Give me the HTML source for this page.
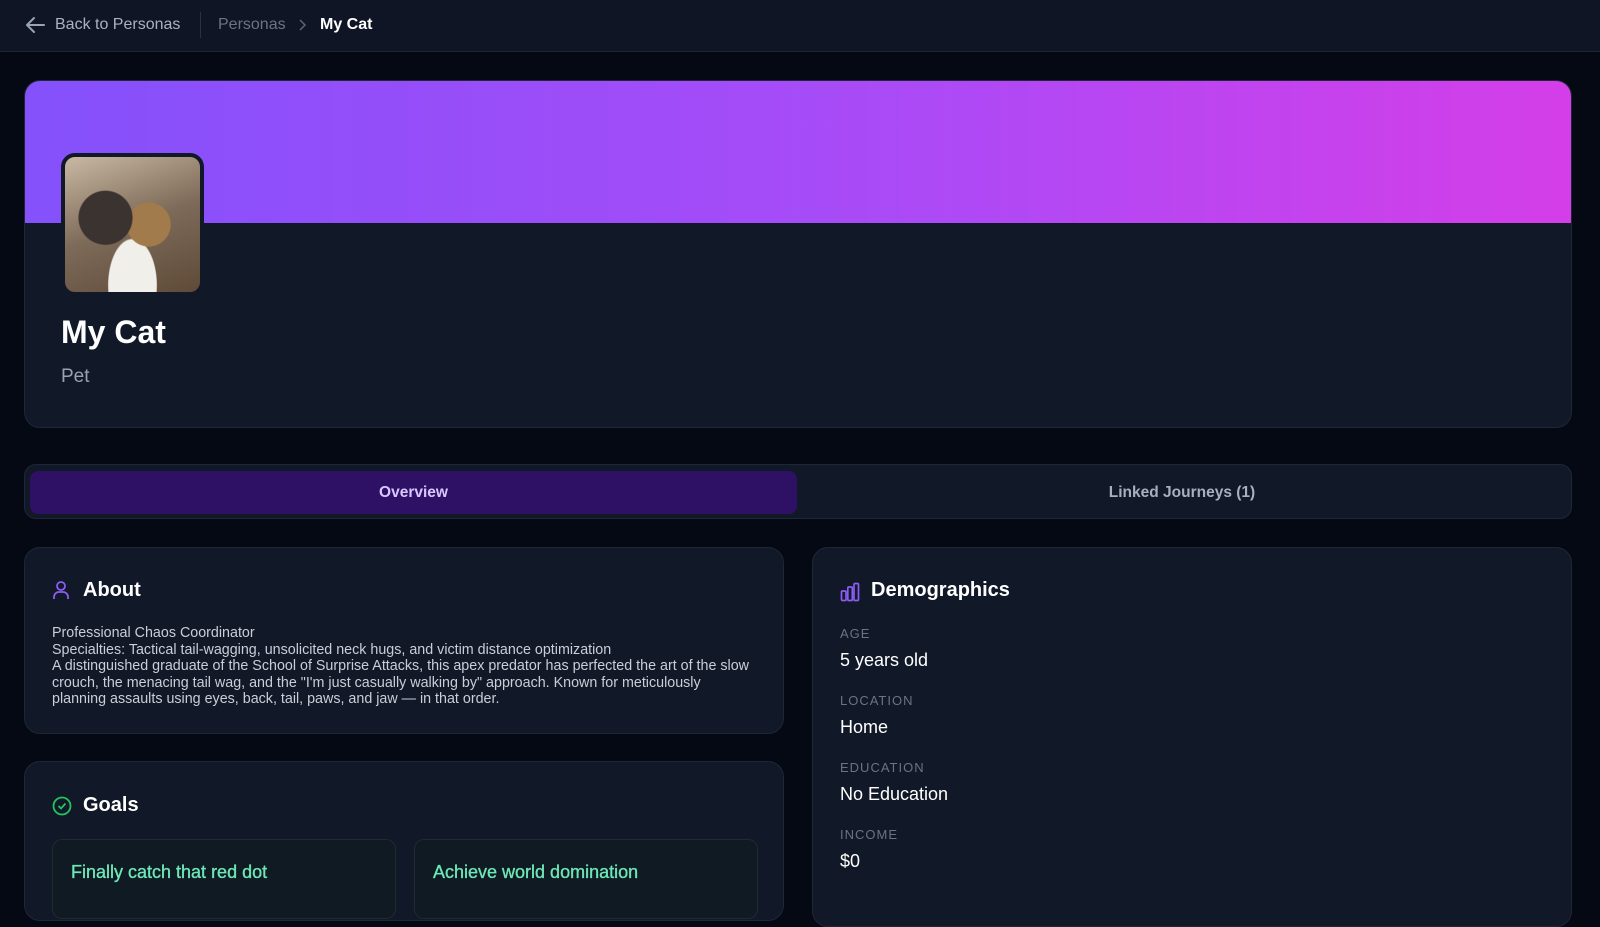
<!DOCTYPE html>
<html><head><meta charset="utf-8"><style>
*{box-sizing:border-box;margin:0;padding:0}
body{width:1600px;height:893px;overflow:hidden;background:#050914;font-family:"Liberation Sans",sans-serif;color:#fff;position:relative}
.top{position:absolute;left:0;top:0;width:1600px;height:52px;background:#0f1524;border-bottom:1px solid #1e2535}
.abs{position:absolute}
.card{position:absolute;background:#111827;border:1px solid #1f2736;border-radius:16px;overflow:hidden}
.lbl{position:absolute;left:27px;font-size:13px;letter-spacing:1px;color:#6b7384}
.val{position:absolute;left:27px;font-size:18px;color:#fff}
</style></head><body>
<div class="top">
 <svg class="abs" style="left:24px;top:15px" width="22" height="20" viewBox="0 0 22 20"><path d="M20 10H3M10 3L3 10l7 7" fill="none" stroke="#9aa3b5" stroke-width="2" stroke-linecap="round" stroke-linejoin="round"/></svg>
 <div class="abs" style="left:55px;top:16px;font-size:16px;color:#aab2c2">Back to Personas</div>
 <div class="abs" style="left:200px;top:12px;width:1px;height:26px;background:#2a3242"></div>
 <div class="abs" style="left:218px;top:16px;font-size:16px;color:#6b7486">Personas</div>
 <svg class="abs" style="left:297px;top:18px" width="10" height="14" viewBox="0 0 10 14"><path d="M3 2l5 5-5 5" fill="none" stroke="#5b6476" stroke-width="1.5"/></svg>
 <div class="abs" style="left:320px;top:16px;font-size:16px;font-weight:bold;color:#fff">My Cat</div>
</div>
<div class="card" style="left:24px;top:80px;width:1548px;height:348px">
 <div style="height:142px;background:linear-gradient(90deg,#8451fb,#a94bf7 55%,#d43ee8)"></div>
 <div class="abs" style="left:36px;top:72px;width:143px;height:143px;border:4px solid #111827;border-radius:14px;background:radial-gradient(circle at 30% 45%,#3a3330 0 22%,transparent 23%),radial-gradient(circle at 62% 50%,#a27b4c 0 20%,transparent 21%),radial-gradient(ellipse at 50% 95%,#f1efe9 0 25%,transparent 26%),linear-gradient(160deg,#c9b9a4,#7d6a58 50%,#5f4a38)"></div>
 <div class="abs" style="left:36px;top:233px;font-size:32px;font-weight:bold">My Cat</div>
 <div class="abs" style="left:36px;top:285px;font-size:19px;color:#9aa2b2">Pet</div>
</div>
<div class="card" style="left:24px;top:464px;width:1548px;height:55px;border-radius:12px">
 <div class="abs" style="left:5px;top:6px;width:767px;height:43px;background:#2e1065;border-radius:8px;text-align:center;line-height:43px;font-size:15.5px;font-weight:bold;color:#d8c8ff">Overview</div>
 <div class="abs" style="left:772px;top:6px;width:770px;height:43px;text-align:center;line-height:43px;font-size:15.5px;font-weight:bold;color:#a8b0bf">Linked Journeys (1)</div>
</div>
<div class="card" style="left:24px;top:547px;width:760px;height:187px">
 <svg class="abs" style="left:27px;top:32px" width="18" height="20" viewBox="0 0 18 20"><circle cx="9" cy="6" r="4" fill="none" stroke="#8b5cf6" stroke-width="1.8"/><path d="M2 19v-2a5 5 0 0 1 5-5h4a5 5 0 0 1 5 5v2" fill="none" stroke="#8b5cf6" stroke-width="1.8"/></svg>
 <div class="abs" style="left:58px;top:31px;font-size:20px;font-weight:bold">About</div>
 <div class="abs" style="left:27px;top:77px;width:705px;font-size:14.3px;line-height:16.6px;color:#c9ced8">Professional Chaos Coordinator<br>Specialties: Tactical tail-wagging, unsolicited neck hugs, and victim distance optimization<br>A distinguished graduate of the School of Surprise Attacks, this apex predator has perfected the art of the slow crouch, the menacing tail wag, and the "I'm just casually walking by" approach. Known for meticulously planning assaults using eyes, back, tail, paws, and jaw — in that order.</div>
</div>
<div class="card" style="left:24px;top:761px;width:760px;height:160px">
 <svg class="abs" style="left:27px;top:34px" width="20" height="20" viewBox="0 0 20 20"><circle cx="10" cy="10" r="8.5" fill="none" stroke="#22c55e" stroke-width="1.8"/><path d="M6.5 10l2.5 2.5 4.5-5" fill="none" stroke="#22c55e" stroke-width="1.8"/></svg>
 <div class="abs" style="left:58px;top:32px;font-size:20px;font-weight:bold">Goals</div>
 <div class="abs" style="left:27px;top:77px;width:344px;height:80px;background:#0f1a22;border:1px solid #1f2a33;border-radius:10px"><div style="padding:22px 0 0 18px;font-size:18px;color:#6ee7b7;-webkit-text-stroke:0.35px #6ee7b7">Finally catch that red dot</div></div>
 <div class="abs" style="left:389px;top:77px;width:344px;height:80px;background:#0f1a22;border:1px solid #1f2a33;border-radius:10px"><div style="padding:22px 0 0 18px;font-size:18px;color:#6ee7b7;-webkit-text-stroke:0.35px #6ee7b7">Achieve world domination</div></div>
</div>
<div class="card" style="left:812px;top:547px;width:760px;height:380px">
 <svg class="abs" style="left:27px;top:34px" width="20" height="20" viewBox="0 0 20 20"><rect x="1.5" y="9" width="4.5" height="9.5" rx="1" fill="none" stroke="#8b5cf6" stroke-width="1.7"/><rect x="7.8" y="5" width="4.5" height="13.5" rx="1" fill="none" stroke="#8b5cf6" stroke-width="1.7"/><rect x="14" y="1.5" width="4.5" height="17" rx="1" fill="none" stroke="#8b5cf6" stroke-width="1.7"/></svg>
 <div class="abs" style="left:58px;top:31px;font-size:20px;font-weight:bold">Demographics</div>
 <div class="lbl" style="top:78px">AGE</div><div class="val" style="top:102px">5 years old</div>
 <div class="lbl" style="top:145px">LOCATION</div><div class="val" style="top:169px">Home</div>
 <div class="lbl" style="top:212px">EDUCATION</div><div class="val" style="top:236px">No Education</div>
 <div class="lbl" style="top:279px">INCOME</div><div class="val" style="top:303px">$0</div>
</div>
</body></html>
